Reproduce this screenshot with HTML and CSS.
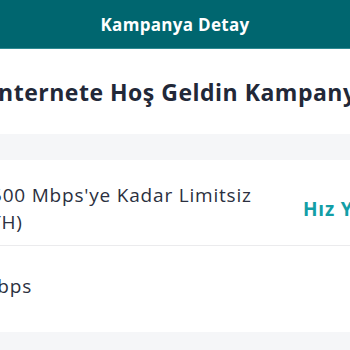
FILE: index.html
```html
<!DOCTYPE html>
<html lang="tr">
<head>
<meta charset="utf-8">
<title>Kampanya Detay</title>
<link rel="stylesheet" href="styles.css">
</head>
<body>
<header class="topbar">
  <h1 class="topbar-title">Kampanya Detay</h1>
</header>
<main class="page">
  <section class="campaign-head">
    <h2 class="campaign-title">İnternete Hoş Geldin Kampanyası</h2>
  </section>
  <div class="spacer"></div>
  <section class="details">
    <div class="detail-row">
      <p class="detail-value indented">500 Mbps'ye Kadar Limitsiz<br>(FTTH)</p>
      <a class="detail-link" href="#">Hız Yükselt</a>
    </div>
    <div class="detail-row">
      <p class="detail-value">5 Mbps</p>
    </div>
  </section>
</main>
</body>
</html>
```
FILE: styles.css
```css
* { box-sizing: border-box; }
html, body {
  margin: 0;
  padding: 0;
  width: 350px;
  height: 350px;
  overflow: hidden;
  background: #f5f6f8;
  font-family: "Open Sans", Lato, sans-serif;
}
.topbar {
  height: 49px;
  background: #00666f;
  display: flex;
  align-items: center;
  justify-content: center;
  border-bottom: 1px solid #2f8a92;
}
.topbar-title {
  margin: 0;
  color: #ffffff;
  font-size: 17px;
  font-weight: 700;
  letter-spacing: 0.3px;
}
.page {
  width: 520px;
}
.campaign-head {
  background: #ffffff;
  height: 85px;
  display: flex;
  align-items: center;
  margin-left: -10px;
}
.campaign-title {
  margin: 0;
  white-space: nowrap;
  font-size: 23px;
  font-weight: 700;
  letter-spacing: 0.5px;
  color: #222838;
}
.spacer {
  height: 26px;
}
.details {
  background: #ffffff;
  margin-left: -38px;
}
.detail-row {
  display: flex;
  align-items: center;
  min-height: 86px;
  padding-top: 13px;
  border-bottom: 1px solid #ebebed;
}
.detail-row:last-child {
  border-bottom: none;
  padding-top: 0;
  padding-bottom: 5px;
}
.detail-value {
  margin: 0;
  width: 341px;
  color: #2b3040;
  font-size: 19px;
  letter-spacing: 0.8px;
  line-height: 27px;
  white-space: nowrap;
}
.indented {
  text-indent: 29px;
}
.detail-link {
  color: #139ea6;
  font-weight: 700;
  font-size: 19px;
  letter-spacing: 0.8px;
  text-decoration: none;
  white-space: nowrap;
}
```
